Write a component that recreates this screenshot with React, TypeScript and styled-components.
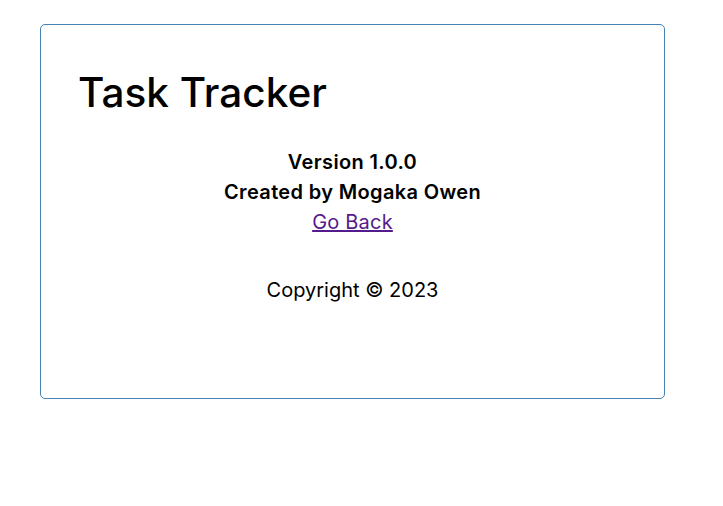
import styled, { createGlobalStyle } from "styled-components";

const GlobalStyle = createGlobalStyle`
  * {
    box-sizing: border-box;
  }
  body {
    margin: 0;
    background: #fff;
    font-family: "Inter", "Noto Sans", sans-serif;
    color: #000;
  }
`;

const Container = styled.div`
  width: 625px;
  min-height: 375px;
  margin: 24px 0 0 40px;
  padding: 44px 37px 30px;
  border: 1px solid steelblue;
  border-radius: 5px;
`;

const Header = styled.header`
  display: flex;
  justify-content: space-between;
  align-items: center;
  margin-bottom: 30px;
`;

const Title = styled.h1`
  margin: 0;
  font-size: 40.5px;
  font-weight: 500;
  line-height: 48px;
`;

const About = styled.div`
  display: flex;
  flex-direction: column;
  align-items: center;
  font-size: 20px;
  line-height: 30px;
`;

const Line = styled.div`
  font-weight: 600;
  letter-spacing: 0.35px;
`;

const BackLink = styled.a`
  color: #551a8b;
  text-decoration: underline;
  font-weight: 400;
  letter-spacing: 0.2px;
`;

const Footer = styled.footer`
  margin-top: 38px;
  text-align: center;
  font-size: 20px;
  line-height: 30px;
`;

export default function App() {
  return (
    <>
      <GlobalStyle />
      <Container>
        <Header>
          <Title>Task Tracker</Title>
        </Header>
        <About>
          <Line>Version 1.0.0</Line>
          <Line>Created by Mogaka Owen</Line>
          <BackLink href="#">Go Back</BackLink>
        </About>
        <Footer>Copyright &copy; 2023</Footer>
      </Container>
    </>
  );
}
